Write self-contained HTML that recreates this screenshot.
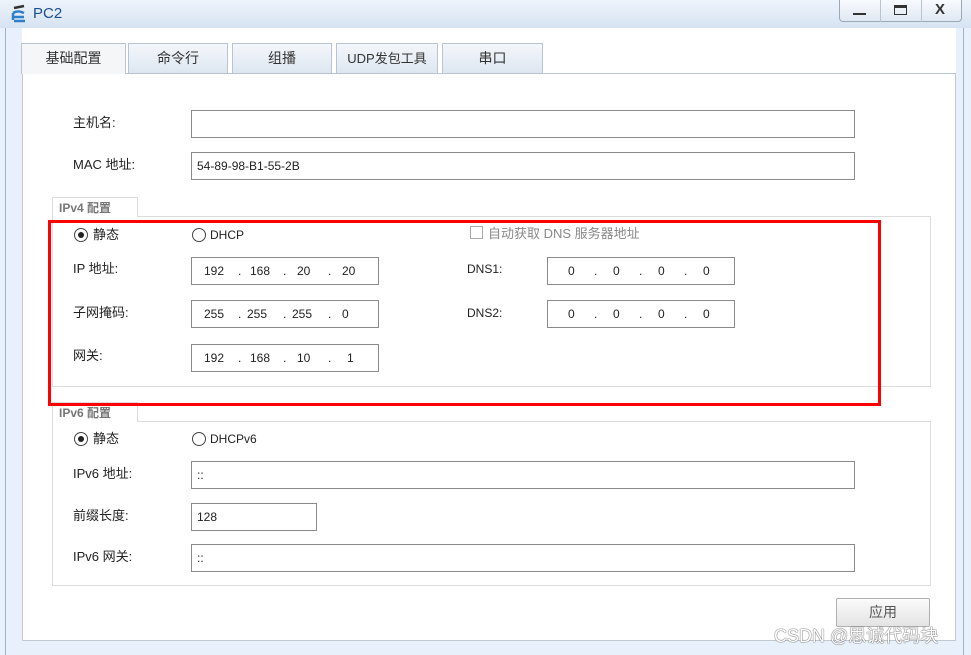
<!DOCTYPE html><html><head><meta charset="utf-8"><style>
*{box-sizing:border-box;margin:0;padding:0}
body{width:971px;height:655px;position:relative;overflow:hidden;background:#e8f0fb;font-family:"Liberation Sans","Noto Sans CJK SC",sans-serif;font-size:13px;color:#222}
.a{position:absolute}
.inp{position:absolute;border:1px solid #8a8a8a;background:#fff;height:28px;font-size:12px;line-height:26px;padding-left:5px}
.lbl{position:absolute;font-size:13px;line-height:15px}
.tab{position:absolute;top:43px;height:30px;border:1px solid #b8c4d2;border-bottom:none;background:linear-gradient(#f4f7fb,#dde6f0);text-align:center;line-height:29px;font-size:14px;color:#333}
.ip span{position:absolute;top:0}
.rad{position:absolute;width:14px;height:14px;border:1px solid #444;border-radius:50%;background:#fff}
.rad.on::after{content:"";position:absolute;left:3px;top:3px;width:6px;height:6px;border-radius:50%;background:#222}
.grp{position:absolute;border:1px solid #dcdcdc;background:#fff}
.gh{position:absolute;height:20px;border:1px solid #dcdcdc;border-bottom:none;background:#fff;font-size:12px;font-weight:bold;color:#777;padding-left:6px;line-height:20px}
</style></head><body>
<div class="a" style="left:0;top:0;width:971px;height:28px;background:linear-gradient(#eef4fb,#d6e3f2)"></div>
<div class="a" style="left:5px;top:28px;width:1px;height:627px;background:#9fb3c8"></div>
<div class="a" style="left:963px;top:28px;width:1px;height:627px;background:#9fb3c8"></div>
<svg class="a" style="left:10px;top:4px" width="22" height="20"><path d="M4 4 L14 2" stroke="#333" stroke-width="2.5"/><path d="M3 9 C8 6 12 8 14 9 M3 13 H14 M3 9 V16 M4 17 H15" stroke="#2c7fc8" stroke-width="2.5" fill="none"/></svg>
<div class="a" style="left:33px;top:5px;font-size:15px;color:#1a4f8a">PC2</div>
<div class="a" style="left:839px;top:0;width:123px;height:22px;border:1px solid #9aa8b8;border-top:none;border-radius:0 0 4px 4px;background:linear-gradient(#f8fbff,#e0e8f2)"></div>
<div class="a" style="left:880px;top:0;width:1px;height:22px;background:#b8c4d0"></div>
<div class="a" style="left:921px;top:0;width:1px;height:22px;background:#b8c4d0"></div>
<div class="a" style="left:853px;top:13px;width:13px;height:2px;background:#333"></div>
<div class="a" style="left:894px;top:5px;width:13px;height:10px;border:1px solid #333;border-top-width:3px"></div>
<div class="a" style="left:935px;top:1px;font-size:15px;font-weight:bold;color:#333">X</div>
<div class="a" style="left:22px;top:28px;width:934px;height:613px;background:#fff;border:1px solid #c0c8d0"></div>
<div class="a" style="left:22px;top:28px;width:934px;height:45px;background:#fff"></div>
<div class="tab" style="left:21px;width:105px;background:#f4f6f8;height:31px">基础配置</div>
<div class="tab" style="left:128px;width:100px">命令行</div>
<div class="tab" style="left:232px;width:100px">组播</div>
<div class="tab" style="left:336px;width:102px;font-size:13px">UDP发包工具</div>
<div class="tab" style="left:442px;width:101px">串口</div>
<div class="a" style="left:126px;top:73px;width:830px;height:1px;background:#b8c4d2"></div>
<div class="lbl" style="left:73px;top:115px">主机名:</div>
<div class="inp" style="left:191px;top:110px;width:664px"></div>
<div class="lbl" style="left:73px;top:157px">MAC 地址:</div>
<div class="inp" style="left:191px;top:152px;width:664px">54-89-98-B1-55-2B</div>

<div class="grp" style="left:52px;top:216px;width:879px;height:171px"></div>
<div class="gh" style="left:52px;top:197px;width:86px">IPv4 配置</div>
<div class="rad on" style="left:74px;top:228px"></div><div class="lbl" style="left:93px;top:227px">静态</div>
<div class="rad" style="left:192px;top:228px"></div><div class="lbl" style="left:210px;top:228px;font-size:12px">DHCP</div>
<div class="a" style="left:470px;top:226px;width:13px;height:13px;border:1px solid #aaa"></div><div class="lbl" style="left:488px;top:226px;color:#888">自动获取 DNS 服务器地址</div>
<div class="lbl" style="left:73px;top:261px">IP 地址:</div>
<div class="inp ip" style="left:191px;top:257px;width:188px"><span style="left:12px">192</span><span style="left:46px">.</span><span style="left:58px">168</span><span style="left:91px">.</span><span style="left:105px">20</span><span style="left:136px">.</span><span style="left:150px">20</span></div>
<div class="lbl" style="left:73px;top:305px">子网掩码:</div>
<div class="inp ip" style="left:191px;top:300px;width:188px"><span style="left:12px">255</span><span style="left:46px">.</span><span style="left:55px">255</span><span style="left:91px">.</span><span style="left:100px">255</span><span style="left:136px">.</span><span style="left:150px">0</span></div>
<div class="lbl" style="left:73px;top:348px">网关:</div>
<div class="inp ip" style="left:191px;top:344px;width:188px"><span style="left:12px">192</span><span style="left:46px">.</span><span style="left:58px">168</span><span style="left:91px">.</span><span style="left:105px">10</span><span style="left:136px">.</span><span style="left:155px">1</span></div>
<div class="lbl" style="left:467px;top:262px;font-size:12px">DNS1:</div>
<div class="inp ip" style="left:547px;top:257px;width:188px"><span style="left:20px">0</span><span style="left:46px">.</span><span style="left:65px">0</span><span style="left:91px">.</span><span style="left:110px">0</span><span style="left:136px">.</span><span style="left:155px">0</span></div>
<div class="lbl" style="left:467px;top:306px;font-size:12px">DNS2:</div>
<div class="inp ip" style="left:547px;top:300px;width:188px"><span style="left:20px">0</span><span style="left:46px">.</span><span style="left:65px">0</span><span style="left:91px">.</span><span style="left:110px">0</span><span style="left:136px">.</span><span style="left:155px">0</span></div>

<div class="grp" style="left:52px;top:421px;width:879px;height:165px"></div>
<div class="gh" style="left:52px;top:402px;width:86px">IPv6 配置</div>
<div class="rad on" style="left:74px;top:432px"></div><div class="lbl" style="left:93px;top:431px">静态</div>
<div class="rad" style="left:192px;top:432px"></div><div class="lbl" style="left:210px;top:432px;font-size:12px">DHCPv6</div>
<div class="lbl" style="left:73px;top:466px">IPv6 地址:</div>
<div class="inp" style="left:191px;top:461px;width:664px">::</div>
<div class="lbl" style="left:73px;top:508px">前缀长度:</div>
<div class="inp" style="left:191px;top:503px;width:126px">128</div>
<div class="lbl" style="left:73px;top:549px">IPv6 网关:</div>
<div class="inp" style="left:191px;top:544px;width:664px">::</div>

<div class="a" style="left:48px;top:220px;width:833px;height:186px;border:3px solid #f00"></div>
<div class="a" style="left:836px;top:598px;width:94px;height:29px;border:1px solid #b0b0b0;border-radius:2px;background:linear-gradient(#fafafa,#e4e4e4);text-align:center;line-height:27px;font-size:14px;color:#555">应用</div>
<div class="a" style="left:774px;top:625px;font-size:18px;line-height:22px;color:#fff;text-shadow:0 0 1px #444,0 0 1px #444">CSDN @思诚代码块</div>
</body></html>
